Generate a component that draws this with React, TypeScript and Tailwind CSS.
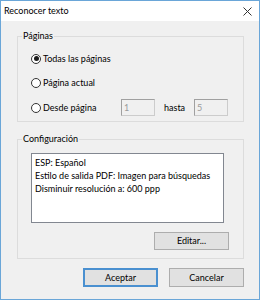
import React, { useState } from 'react';

type Mode = 'todas' | 'actual' | 'desde';

const Radio: React.FC<{ checked: boolean; label: string; onClick: () => void }> = ({ checked, label, onClick }) => (
  <button type="button" onClick={onClick} className="flex items-center h-[17px] whitespace-nowrap">
    <span className="w-[10px] h-[10px] rounded-full border border-[#333333] bg-white flex items-center justify-center">
      {checked && <span className="w-[5px] h-[5px] rounded-full bg-[#1a1a1a]" />}
    </span>
    <span className="ml-[2px]">{label}</span>
  </button>
);

const PageBox: React.FC<{ value: string }> = ({ value }) => (
  <div className="w-[34px] h-[17px] bg-[#f0f0f0] border border-[#cccccc] border-t-[#a0a0a0] border-l-[#a0a0a0] text-[#9a9a9a] pl-[2px] leading-[15px]">
    {value}
  </div>
);

const App: React.FC = () => {
  const [mode, setMode] = useState<Mode>('todas');

  return (
    <div className="w-[260px] h-[300px] flex flex-col border border-[#6aa6d8] bg-[#f0f0f0] text-[9px] text-black font-['Lato',sans-serif]">
      {/* Title bar */}
      <div className="h-[20px] bg-white flex items-center justify-between pl-[3px] pr-[6px]">
        <span>Reconocer texto</span>
        <svg width="9" height="9" viewBox="0 0 9 9" className="mr-[1px]">
          <path d="M0.5 0.5L8.5 8.5M8.5 0.5L0.5 8.5" stroke="#333333" strokeWidth="1" />
        </svg>
      </div>

      <div className="flex-1 flex flex-col pl-[16px] pr-[15px]">
        {/* Páginas */}
        <fieldset className="mt-[9px] border border-[#dcdcdc] p-0">
          <legend className="ml-[4px] px-[1px] leading-[12px]">Páginas</legend>
          <div className="pl-[13px] pt-[8px] pb-[5px] flex flex-col">
            <Radio checked={mode === 'todas'} label="Todas las páginas" onClick={() => setMode('todas')} />
            <div className="mt-[7px]">
              <Radio checked={mode === 'actual'} label="Página actual" onClick={() => setMode('actual')} />
            </div>
            <div className="mt-[8px] flex items-center">
              <div className="w-[90px]">
                <Radio checked={mode === 'desde'} label="Desde página" onClick={() => setMode('desde')} />
              </div>
              <PageBox value="1" />
              <span className="ml-[9px] w-[30px]">hasta</span>
              <PageBox value="5" />
            </div>
          </div>
        </fieldset>

        {/* Configuración */}
        <fieldset className="mt-[11px] border border-[#dcdcdc] p-0">
          <legend className="ml-[4px] px-[1px] leading-[12px]">Configuración</legend>
          <div className="pl-[13px] pr-[14px] pt-[8px] pb-[8px] flex flex-col">
            <div className="w-[193px] h-[70px] bg-white border border-[#828790] px-[3px] pt-[2px] leading-[13px] whitespace-nowrap">
              <div>ESP: Español</div>
              <div>Estilo de salida PDF: Imagen para búsquedas</div>
              <div>Disminuir resolución a: 600 ppp</div>
            </div>
            <button type="button" className="mt-[9px] self-end w-[75px] h-[18px] bg-[#e1e1e1] border border-[#adadad]">
              Editar...
            </button>
          </div>
        </fieldset>

        <div className="mt-[9px] flex justify-end gap-[11px]">
          <button type="button" className="w-[75px] h-[19px] bg-[#e1e1e1] border-2 border-[#4a90d0]">
            Aceptar
          </button>
          <button type="button" className="w-[75px] h-[19px] bg-[#e1e1e1] border border-[#adadad]">
            Cancelar
          </button>
        </div>
      </div>
    </div>
  );
};

export default App;
